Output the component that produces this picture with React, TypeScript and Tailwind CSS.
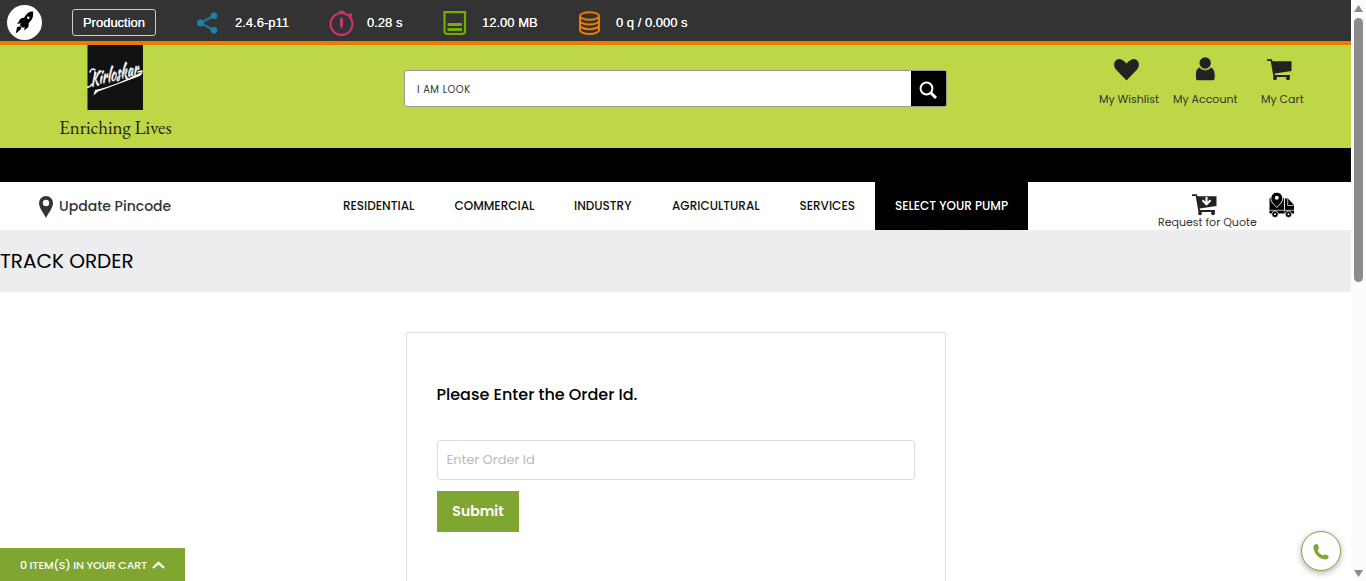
import React from "react";

const Rocket = () => (
  <svg width="35" height="35" viewBox="0 0 35 35">
    <circle cx="17.5" cy="17.5" r="17.5" fill="#fff" />
    <path d="M26 6.300c-3 .3-5.200 1.200-6.600 3.200l-2.200 3.100-3.800 1.200-3.200 5.200 3.400-.7-.6 2.200 2.600 2.200 2-.6-.4 3.400 4.200-3.600.4-4 2.400-2.600c1.700-2.200 2.300-5 1.800-9z" fill="#000" />
    <path d="M13 21.200l-3 1-1.200 6.400 4.600-3.800 1.200-2.300z" fill="#000" />
    <circle cx="21.300" cy="12.700" r="1.300" fill="#fff" />
  </svg>
);

const Share = () => (
  <svg width="22" height="22" viewBox="0 0 22 22" fill="#1f7fab" stroke="#1f7fab">
    <path d="M17 3.700L4 11l13 7.300" fill="none" strokeWidth="2" />
    <circle cx="17" cy="3.700" r="3" />
    <circle cx="3.500" cy="11" r="3.200" />
    <circle cx="17" cy="18.300" r="3" />
  </svg>
);

const Timer = () => (
  <svg width="26" height="26" viewBox="0 0 26 26" fill="none" stroke="#d0316f" strokeWidth="2">
    <circle cx="12.500" cy="14" r="11" />
    <path d="M9.500 1.700h6M12.500 1v3M20.500 3.500l2.500 2.500M21 6.500l2-2" />
    <path d="M12.500 7.500v11" strokeWidth="1.500" />
    <path d="M12.500 9.500v5.500" strokeWidth="3.200" strokeLinecap="round" />
  </svg>
);

const Memory = () => (
  <svg width="24" height="26" viewBox="0 0 24 26" fill="none" stroke="#75ad00" strokeWidth="2.200">
    <path d="M1.500 2.200h20.500v18.800a3 3 0 0 1-3 3H4.500a3 3 0 0 1-3-3z" />
    <path d="M4.500 14.500h14.500M4.500 19.500h14.500" strokeWidth="2.800" />
  </svg>
);

const Database = () => (
  <svg width="21" height="24" viewBox="0 0 21 24" fill="none" stroke="#eb7b00" strokeWidth="2">
    <ellipse cx="10.500" cy="5" rx="9.500" ry="3.800" />
    <path d="M1 5v14c0 2.200 4.200 4 9.500 4s9.500-1.800 9.500-4V5M1 9.500c0 2.200 4.200 4 9.500 4s9.500-1.800 9.500-4M1 14.200c0 2.200 4.200 4 9.500 4s9.500-1.800 9.500-4" />
  </svg>
);

const Cart = ({ arrow = false }: { arrow?: boolean }) => (
  <svg width="25" height="22" viewBox="0 0 25 22" fill="#222">
    <path d="M0 .3h4.800L5.600 2.300H24.500v9.800L7.700 14.400l.3 1.700h15v1.800H6.500L3.700 2H0z" />
    <circle cx="8" cy="19.300" r="1.900" />
    <circle cx="21" cy="19.300" r="1.900" />
    {arrow && <path d="M14.500 3v7M10.500 6.300l4 4 4-4" stroke="#fff" strokeWidth="2" fill="none" />}
  </svg>
);

const Truck = () => (
  <svg width="26" height="26" viewBox="0 0 26 26" fill="#000">
    <path d="M.5 6h14.700v15.500H.5zM16 6.500h3l6 6.500v8.500h-9.500z" />
    <path d="M7.800.2a6 6 0 0 1 6 6c0 4-3 6-6 9.300-3-3.300-6-5.300-6-9.300a6 6 0 0 1 6-6z" stroke="#fff" strokeWidth=".9" />
    <circle cx="7.800" cy="5.700" r="2" fill="#fff" />
    <path d="M18.700 7v6.500h6M.5 18.300h24.500M15.500 6v12.500" fill="none" stroke="#fff" strokeWidth=".7" />
    <circle cx="6" cy="22.300" r="3.200" stroke="#fff" strokeWidth=".7" />
    <circle cx="19.500" cy="22.300" r="3.200" stroke="#fff" strokeWidth=".7" />
    <circle cx="6" cy="22.300" r="1" fill="#fff" />
    <circle cx="19.500" cy="22.300" r="1" fill="#fff" />
  </svg>
);

const Logo = () => (
  <svg width="56" height="65" viewBox="0 0 56 65">
    <path d="M.5 0h55.500v65H.5z" fill="#111" />
    <text transform="translate(4 41) rotate(-14)" fontSize="18" textLength="49" lengthAdjust="spacingAndGlyphs" fill="#fff" stroke="#fff" strokeWidth=".3" fontFamily="'Kaushan Script', 'Dancing Script', Pacifico, 'Liberation Serif', serif" fontStyle="italic">Kirloskar</text>
    <path d="M3 27c1-3 3-4 5-2M5 39c-1 2-2.500 3-5 3.500M51 27l4-1" fill="none" stroke="#fff" strokeWidth="1.600" strokeLinecap="round" />
    <path d="M8 45c16-3 30-10 46-17.500l1.500-1c0 2.500-1.500 4-4 5L11 46.500l-4.500 4z" fill="#fff" />
  </svg>
);

export default function App() {
  return (
    <div className="flex h-[581px] w-[1366px] overflow-hidden bg-white font-['Poppins','Inter',sans-serif] text-black">
      <div className="relative flex w-[1351px] shrink-0 flex-col">
        <div className="flex h-[45px] shrink-0 border-b-4 border-[#eb7b00] bg-[#333] pl-[7px] pt-[5px] font-['Liberation_Sans',sans-serif] text-[13px] leading-5 text-white [text-shadow:0_0_0.500px_#fff]">
          <div className="w-[65px]"><Rocket /></div>
          <div className="mt-1 mr-[41px] flex h-[27px] w-[84px] items-center justify-center rounded-[3px] border border-[#ccc]"><span>Production</span></div>
          <div className="mt-[7px] w-[38px]"><Share /></div>
          <div className="mt-2 w-[94px] whitespace-nowrap">2.4.6-p11</div>
          <div className="mt-[5px] w-[38px]"><Timer /></div>
          <div className="mt-2 w-[76px] whitespace-nowrap">0.28 s</div>
          <div className="mt-[5px] w-[39px]"><Memory /></div>
          <div className="mt-2 w-[97px] whitespace-nowrap">12.00 MB</div>
          <div className="mt-[6px] w-[37px]"><Database /></div>
          <div className="mt-2 whitespace-nowrap">0 q / 0.000 s</div>
        </div>

        <header className="flex h-[103px] shrink-0 bg-[#bdd747]">
          <div className="flex w-[404px] flex-col pl-[59px]">
            <div className="pl-[28px]"><Logo /></div>
            <div className="mt-[6px] whitespace-nowrap font-['EB_Garamond','Liberation_Serif',serif] text-[18.900px] leading-6 text-[#222]">Enriching Lives</div>
          </div>
          <div className="mt-[25px] flex h-[37px] w-[543px] rounded-[3px] border border-[#999] bg-white">
            <div className="flex flex-1 items-center pl-3 pt-0.5 text-[10px] tracking-[0.500px] text-[#333]">I AM LOOK</div>
            <div className="flex w-[35px] items-center justify-center bg-black pt-1">
              <svg width="19" height="19" viewBox="0 0 19 19" fill="none" stroke="#fff"><circle cx="7.500" cy="7.500" r="5.900" strokeWidth="2" /><path d="M11.800 11.800l5.200 5.200" strokeWidth="3" /></svg>
            </div>
          </div>
          <nav className="ml-[152px] flex text-[11px] text-[#333]">
            <div className="flex w-[74px] flex-col pt-[14px]">
              <svg className="ml-[15px]" width="25" height="22" viewBox="0 0 26 22" preserveAspectRatio="none"><path d="M13 21.500L2 10.500C-3 4 3-2 8 .7c2 .8 4 2.200 5 4 1-1.800 3-3.200 5-4C23-2 29 4 24 10.500z" fill="#222" /></svg>
              <span className="mt-[10px] whitespace-nowrap leading-4">My Wishlist</span>
            </div>
            <div className="flex w-[88px] flex-col pt-[12px]">
              <svg className="ml-[23px]" width="19" height="24" viewBox="0 0 19 24" fill="#222"><circle cx="9.200" cy="6" r="5.700" /><path d="M3.700 10.500c3 3 8 3 11 0 3 1 4 4 4 8v2c0 2-1 2.800-3 2.800h-13c-2 0-3-.8-3-2.800v-2c0-4 1-7 4-8z" /><path d="M4 10.700c3 3 7.500 3 10.500 0" fill="none" stroke="#bdd747" strokeWidth=".8" /></svg>
              <span className="mt-[10px] whitespace-nowrap leading-4">My Account</span>
            </div>
            <div className="flex flex-col pt-[14px]">
              <div className="ml-[6px]"><Cart /></div>
              <span className="mt-[10px] whitespace-nowrap leading-4">My Cart</span>
            </div>
          </nav>
        </header>
        <div className="h-[34px] shrink-0 bg-black" />

        <div className="flex h-12 shrink-0 items-center">
          <div className="flex w-[343px] items-center pl-[39px] text-sm font-medium text-[#333]">
            <svg className="mr-[6px] mt-0.5" width="14" height="22" viewBox="0 0 14 22"><path fillRule="evenodd" d="M7 0a7 7 0 0 1 7 7c0 5-4 9-7 15C4 16 0 12 0 7a7 7 0 0 1 7-7zm0 3.800a3.200 3.200 0 1 0 0 6.400 3.200 3.200 0 0 0 0-6.400z" fill="#333" /></svg>
            <span className="whitespace-nowrap">Update Pincode</span>
          </div>
          <nav className="flex h-full items-center whitespace-nowrap text-xs font-medium text-[#111]">
            <span className="w-[111.500px]">RESIDENTIAL</span>
            <span className="w-[119.500px]">COMMERCIAL</span>
            <span className="w-[98px]">INDUSTRY</span>
            <span className="w-[127.500px]">AGRICULTURAL</span>
            <span className="w-[75.500px]">SERVICES</span>
            <span className="flex h-full w-[153px] items-center justify-center bg-black text-white">SELECT YOUR PUMP</span>
          </nav>
          <div className="ml-[130px] w-[110px] self-start pt-3 text-[11px] text-[#333]">
            <div className="ml-[34px] h-5"><Cart arrow /></div>
            <div className="whitespace-nowrap leading-4">Request for Quote</div>
          </div>
          <div className="self-start pl-px pt-[10px]"><Truck /></div>
        </div>

        <div className="flex h-[62px] shrink-0 items-center bg-[#ecedef] text-[20px]"><h1>TRACK ORDER</h1></div>

        <main className="ml-[406px] mt-10 flex h-[300px] w-[540px] shrink-0 flex-col border border-[#ddd] px-[30px] pt-[50px]">
          <h2 className="-ml-px h-[57px] pl-[0.500px] text-base font-medium">Please Enter the Order Id.</h2>
          <div className="flex h-10 shrink-0 items-center rounded-[3px] border border-[#ddd] pl-[8.500px] text-[13px] text-[#bbb]">Enter Order Id</div>
          <button className="mt-[11px] h-[41px] w-[82px] shrink-0 bg-[#7ea631] pb-0.5 text-sm font-semibold text-white">Submit</button>
        </main>

        <div className="absolute bottom-0 left-0 flex h-[33px] w-[185px] items-center bg-[#7ea631] pl-5 text-[11px] font-medium text-white">
          <span className="w-[132px] whitespace-nowrap pt-px tracking-[-0.160px]">0 ITEM(S) IN YOUR CART</span>
          <svg width="13" height="8" viewBox="0 0 13 8" fill="none" stroke="#fff" strokeWidth="2.400"><path d="M1 7l5.500-5.200L12 7" /></svg>
        </div>
        <div className="absolute bottom-[10px] right-[10px] flex h-10 w-10 items-center justify-center rounded-full border border-[#7ea631] bg-white pt-px shadow-[0_2px_6px_rgba(0,0,0,0.3)]">
          <svg width="16" height="16" viewBox="0 0 17 17"><path d="M4 0c-2 0-3.500 1.600-3.600 3.400C1 10 6 15.500 13 16.500c2 0 3.500-1.300 3.600-3-.5-1.500-2-2.500-4-2.400-1 .2-1.500 1-2.300 1C8 11.500 5.500 9 5 7c0-1 1-1.400 1.100-2.500C6 2 5.500.3 4 0z" fill="#7ea631" /></svg>
        </div>
      </div>
      <div className="flex w-[15px] flex-col items-center bg-[#fcfcfc]">
        <svg className="mt-[5px] shrink-0" width="9" height="7" viewBox="0 0 9 7"><path d="M4.500 0L9 7H0z" fill="#8b8b8b" /></svg>
        <div className="mt-[6px] h-[264px] w-[9px] shrink-0 rounded-full bg-[#8b8b8b]" />
        <svg className="mb-1 mt-auto shrink-0" width="9" height="7" viewBox="0 0 9 7"><path d="M0 0h9L4.500 7z" fill="#8b8b8b" /></svg>
      </div>
    </div>
  );
}
